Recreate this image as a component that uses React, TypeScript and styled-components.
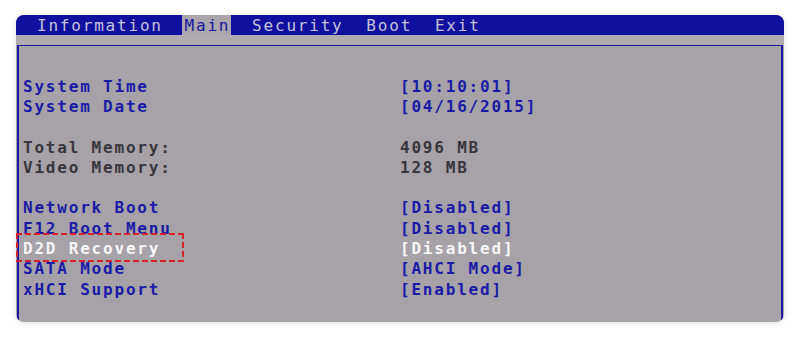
import React from "react";
import styled, { createGlobalStyle } from "styled-components";

const GlobalStyle = createGlobalStyle`
  html, body {
    margin: 0;
    padding: 0;
    background: #ffffff;
  }
  body {
    font-family: "DejaVu Sans Mono", "Liberation Mono", monospace;
  }
`;

const Page = styled.div`
  width: 800px;
  height: 338px;
  padding: 15px 16px 0;
  box-sizing: border-box;
`;

const Card = styled.div`
  width: 768px;
  height: 307px;
  border-radius: 8px;
  overflow: hidden;
  background: #a6a2a8;
  box-shadow: 0 1px 6px rgba(0, 0, 0, 0.13);
  display: flex;
  flex-direction: column;
`;

const MenuBar = styled.div`
  height: 20px;
  background: #10109e;
  display: flex;
  align-items: stretch;
  gap: 22.8px;
  padding-left: 21px;
  font-size: 16px;
  letter-spacing: 1.8px;
  color: #c4c2dc;
`;

const MenuItem = styled.div<{ $active?: boolean }>`
  display: flex;
  align-items: center;
  padding: ${(p) => (p.$active ? "0 1px 0 3px" : "0")};
  margin: ${(p) => (p.$active ? "0 -2px 0 -4px" : "0")};
  background: ${(p) => (p.$active ? "#aaa6ac" : "transparent")};
  color: ${(p) => (p.$active ? "#16169e" : "inherit")};
`;

const Band = styled.div`
  height: 10px;
  background: #afabb1;
`;

const Panel = styled.div`
  flex: 1;
  margin-left: 1px;
  margin-right: 1px;
  border-top: 1.5px solid #1a1aa0;
  border-left: 2px solid #1a1aa0;
  border-right: 2px solid #1a1aa0;
  padding: 30px 0 0 4px;
`;

const Row = styled.div`
  display: grid;
  grid-template-columns: 377px 1fr;
  height: 20.3px;
  align-items: center;
  font-size: 16px;
  font-weight: bold;
  letter-spacing: 1.8px;
  white-space: pre;
`;

const Gap = styled.div`
  height: 20.3px;
`;

const Cell = styled.span<{ $tone: "blue" | "gray" | "white" }>`
  color: ${(p) =>
    p.$tone === "blue" ? "#1a1aa6" : p.$tone === "white" ? "#f6f6f6" : "#38363c"};
`;

const dash = "#d7222c";

const Marked = styled.span`
  position: relative;
  &::after {
    content: "";
    position: absolute;
    left: -7px;
    right: -24px;
    top: -6px;
    bottom: -4px;
    background:
      repeating-linear-gradient(90deg, ${dash} 0 6px, transparent 6px 9px) top / 100% 2px no-repeat,
      repeating-linear-gradient(90deg, ${dash} 0 6px, transparent 6px 9px) bottom / 100% 2px no-repeat,
      repeating-linear-gradient(180deg, ${dash} 0 6px, transparent 6px 9px) left / 2px 100% no-repeat,
      repeating-linear-gradient(180deg, ${dash} 0 6px, transparent 6px 9px) right / 2px 100% no-repeat;
  }
`;

type Tone = "blue" | "gray" | "white";
type Item = { label: string; value: string; tone: Tone; mark?: boolean } | null;

const items: Item[] = [
  { label: "System Time", value: "[10:10:01]", tone: "blue" },
  { label: "System Date", value: "[04/16/2015]", tone: "blue" },
  null,
  { label: "Total Memory:", value: "4096 MB", tone: "gray" },
  { label: "Video Memory:", value: "128 MB", tone: "gray" },
  null,
  { label: "Network Boot", value: "[Disabled]", tone: "blue" },
  { label: "F12 Boot Menu", value: "[Disabled]", tone: "blue" },
  { label: "D2D Recovery", value: "[Disabled]", tone: "white", mark: true },
  { label: "SATA Mode", value: "[AHCI Mode]", tone: "blue" },
  { label: "xHCI Support", value: "[Enabled]", tone: "blue" },
];

const menu = ["Information", "Main", "Security", "Boot", "Exit"];

export default function App() {
  return (
    <Page>
      <GlobalStyle />
      <Card>
        <MenuBar>
          {menu.map((m) => (
            <MenuItem key={m} $active={m === "Main"}>
              {m}
            </MenuItem>
          ))}
        </MenuBar>
        <Band />
        <Panel>
          {items.map((it, i) =>
            it ? (
              <Row key={i}>
                <Cell $tone={it.tone}>
                  {it.mark ? <Marked>{it.label}</Marked> : it.label}
                </Cell>
                <Cell $tone={it.tone}>{it.value}</Cell>
              </Row>
            ) : (
              <Gap key={i} />
            )
          )}
        </Panel>
      </Card>
    </Page>
  );
}
